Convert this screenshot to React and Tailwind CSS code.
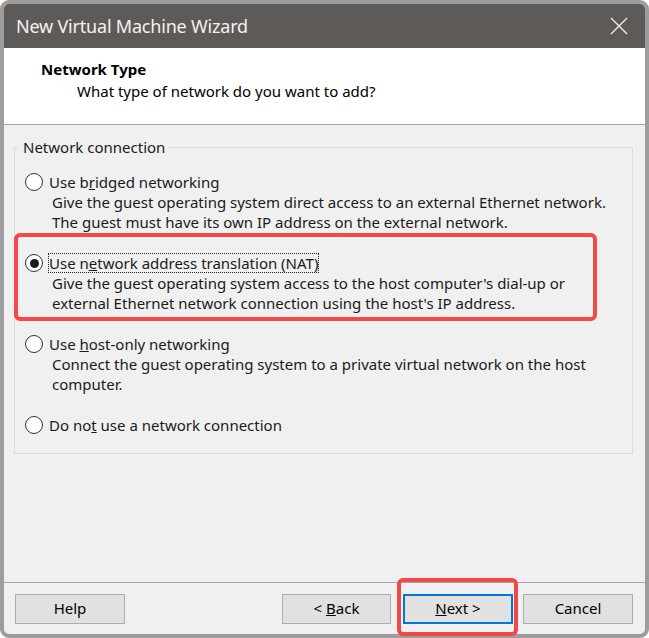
import "react";

const font = { fontFamily: '"Noto Sans", "Open Sans", sans-serif' };

function Radio({ checked }) {
  return (
    <span className="w-[18px] h-[18px] rounded-full border border-[#333333] bg-white flex items-center justify-center shrink-0">
      {checked && <span className="w-[9px] h-[9px] rounded-full bg-[#1a1a1a]" />}
    </span>
  );
}

function Option({ label, lines, checked, focused }) {
  return (
    <div className="flex flex-col pl-[2px]">
      <div className="flex items-center h-[20px] gap-[6px]">
        <Radio checked={checked} />
        <span
          className={
            focused
              ? "outline outline-1 outline-dotted outline-[#222] leading-[18px]"
              : "leading-[18px]"
          }
        >
          {label}
        </span>
      </div>
      {lines.map((l) => (
        <div key={l} className="pl-[27px] leading-[20px]">
          {l}
        </div>
      ))}
    </div>
  );
}

function Btn({ children, primary, w = "w-[110px]" }) {
  return (
    <button
      className={
        primary
          ? `${w} h-[30px] bg-[#e1e1e1] border-2 border-[#0078d7] text-[15px] text-black`
          : `${w} h-[30px] bg-[#e1e1e1] border border-[#adadad] text-[15px] text-black`
      }
    >
      {children}
    </button>
  );
}

export default function App() {
  return (
    <div className="w-[649px] h-[638px] bg-white text-[#1a1a1a]" style={font}>
      <div className="w-full h-full border-4 border-[#9d9d9d] rounded-[9px] flex flex-col bg-[#f0f0f0]">
        <div className="h-[44px] bg-[#5e5a57] rounded-t-[5px] flex items-center justify-between pl-[12px] pr-[16px] shrink-0">
          <span className="text-[18px] text-[#f2f2f2] tracking-[-0.2px]">New Virtual Machine Wizard</span>
          <svg width="20" height="20" viewBox="0 0 20 20" fill="none" stroke="#f0f0f0" strokeWidth="1.3">
            <path d="M2 2 L18 18 M18 2 L2 18" />
          </svg>
        </div>
        <div className="h-[77px] bg-white border-b border-[#a6a6a6] shrink-0 pt-[10px]">
          <div className="pl-[37px] font-bold text-[15px] leading-[22px] text-black">Network Type</div>
          <div className="pl-[73px] text-[15px] leading-[22px] text-black">
            What type of network do you want to add?
          </div>
        </div>
        <div className="flex-1 flex flex-col">
          <fieldset className="mt-[12px] ml-[10px] mr-[12px] border border-[#dcdcdc] pl-[8px] pb-[18px] text-[15px]">
            <legend className="ml-[-4px] px-[4px] text-[15px] leading-[20px]">Network connection</legend>
            <div className="flex flex-col gap-[21px] mt-[15px]">
              <Option
                label={<>Use b<u>r</u>idged networking</>}
                lines={[
                  "Give the guest operating system direct access to an external Ethernet network.",
                  "The guest must have its own IP address on the external network.",
                ]}
              />
              <div className="relative">
                <Option
                  checked
                  focused
                  label={<>Use n<u>e</u>twork address translation (NAT)</>}
                  lines={[
                    "Give the guest operating system access to the host computer's dial-up or",
                    "external Ethernet network connection using the host's IP address.",
                  ]}
                />
                <div className="absolute left-[-9px] top-[-20px] w-[583px] h-[88px] border-4 border-[#f24848] rounded-[6px] pointer-events-none" />
              </div>
              <Option
                label={<>Use <u>h</u>ost-only networking</>}
                lines={[
                  "Connect the guest operating system to a private virtual network on the host",
                  "computer.",
                ]}
              />
              <Option label={<>Do no<u>t</u> use a network connection</>} lines={[]} />
            </div>
          </fieldset>
          <div className="flex-1" />
          <div className="border-t border-[#a6a6a6] h-[52px] flex items-center pl-[11px] pr-[12px]">
            <Btn>Help</Btn>
            <div className="flex-1" />
            <div className="flex">
              <Btn w="w-[109px]">
                &lt; <u>B</u>ack
              </Btn>
              <div className="relative ml-[12px]">
                <Btn primary>
                  <u>N</u>ext &gt;
                </Btn>
                <div className="absolute left-[-6px] top-[-16px] w-[121px] h-[58px] border-4 border-[#f24848] rounded-[6px] pointer-events-none" />
              </div>
              <div className="ml-[10px]">
                <Btn>Cancel</Btn>
              </div>
            </div>
          </div>
        </div>
      </div>
    </div>
  );
}
